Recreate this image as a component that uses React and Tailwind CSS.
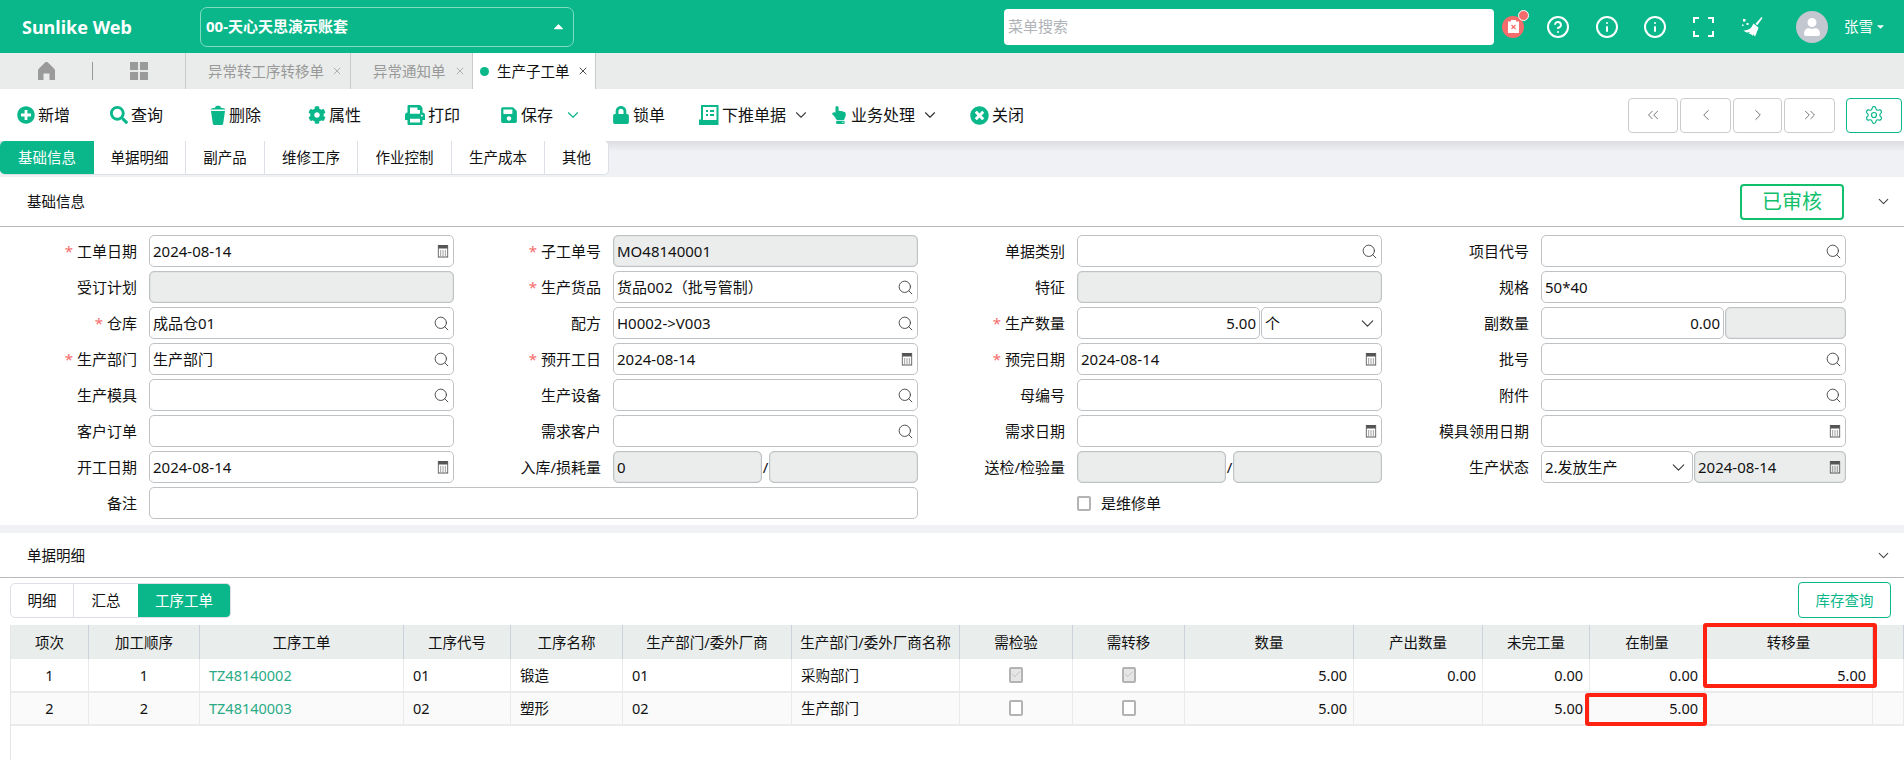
import React from "react";
import {
  FaPlusCircle, FaSearch, FaCog, FaPrint, FaSave, FaLock, FaHandPointUp, FaTimesCircle,
  FaUser, FaCaretUp, FaCaretDown,
} from "react-icons/fa";
import {
  ChevronDown, ChevronLeft, ChevronRight, ChevronsLeft, ChevronsRight, Search, Settings, Check, Info, CircleHelp, X,
} from "lucide-react";

const green = "text-[#09b78a]";

function CalendarIcon() {
  return (
    <svg width="12" height="14" viewBox="0 0 14 14" preserveAspectRatio="none" className="shrink-0 mr-[1px] text-[#555]">
      <rect x="1.5" y="1.5" width="11" height="11.5" fill="none" stroke="currentColor" />
      <rect x="1.5" y="1.5" width="11" height="3" fill="currentColor" />
      <path d="M3.5 7h1.4M6.3 7h1.4M9.1 7h1.4M3.5 9h1.4M6.3 9h1.4M9.1 9h1.4M3.5 11h1.4M6.3 11h1.4M9.1 11h1.4" stroke="currentColor" />
    </svg>
  );
}

function PushIcon() {
  return (
    <svg width="20" height="20" viewBox="0 0 20 20" className={green}>
      <path d="M3 1h15.5v18H1v-3.5h2z" fill="none" stroke="currentColor" strokeWidth="2" />
      <rect x="1" y="15" width="17" height="4.5" fill="currentColor" />
      <path d="M7 6h2M11 6h4M7 10h2M11 10h4" stroke="currentColor" strokeWidth="2" />
    </svg>
  );
}

function BucketIcon() {
  return (
    <svg width="16" height="20" viewBox="0 0 16 20" fill="currentColor" className={green}>
      <path d="M5.5 1.5C6 .5 10 .5 10.500 1.500L10.800 2.800C13 3 15 3.400 15.500 4.500H.5C1 3.400 3 3 5.200 2.800z" />
      <path d="M1 6h14l-1.800 12.500c-.1.800-.8 1.500-1.700 1.500H4.500c-.9 0-1.600-.7-1.700-1.500z" />
    </svg>
  );
}

function HomeIcon() {
  return (
    <svg width="17" height="18" viewBox="0 0 17 18" fill="currentColor">
      <path d="M8.500 0c1 0 1.500.5 2 1L16 6.500c.7.700 1 1.300 1 2.200V18h-5.500v-6.500h-6V18H0V8.700c0-.9.300-1.500 1-2.200L6.500 1c.5-.5 1-1 2-1z" />
    </svg>
  );
}

function BroomIcon() {
  return (
    <svg width="21" height="20" viewBox="0 0 21 20" fill="white">
      <path d="M19.500 0l1 1-5.200 7.200-1.800-1.400z" />
      <path d="M11.500 6.500l5 4c-.2 1.500-.8 2.700-1.400 3.700-.5 1.500-1 3.200-2 5.300l-2.300-2.200.2 1.700-2-1.700-2.400-.9 1.400-1.200-3.500.3-3-1.800c3-.5 5.500-1 7.500-3 .7-.8 1.500-2.500 2.500-4.200z" />
      <rect x="1" y="2" width="2.500" height="2.500" />
      <rect x="4.500" y="6" width="2" height="2" />
      <rect x="0" y="7.500" width="1.500" height="1.500" />
    </svg>
  );
}

function ToolButton({ icon, label, width, chevron }) {
  return (
    <div className={`flex items-center gap-[3px] ${width}`}>
      {icon}
      <span>{label}</span>
      {chevron && <ChevronDown size={18} strokeWidth={1.5} className={chevron} />}
    </div>
  );
}

function Field({ label, required, span, children }) {
  return (
    <div className={`flex items-center gap-3 h-[32px] ${span ? "col-span-2" : ""}`}>
      <label className="w-[137px] shrink-0 text-right whitespace-nowrap">
        {required && <span className="text-[#f56c6c] mr-1">*</span>}
        {label}
      </label>
      {children}
    </div>
  );
}

function Box({ value, disabled, icon, right, className = "w-[305px]" }) {
  return (
    <div
      className={`flex items-center h-[32px] px-[3px] border border-[#bfc2c4] rounded-[5px] shrink-0 ${className} ${
        disabled ? "bg-[#ebeded] shadow-[inset_0_0_1px_#999]" : "bg-white"
      } ${right ? "justify-end" : "justify-between"}`}
    >
      <span className="whitespace-nowrap">{value}</span>
      {icon === "search" && <Search size={17} strokeWidth={1.3} className="shrink-0 text-[#444]" />}
      {icon === "date" && <CalendarIcon />}
      {icon === "select" && <ChevronDown size={21} strokeWidth={1.2} className="shrink-0 text-[#333]" />}
    </div>
  );
}

function TinyCheck({ checked }) {
  return (
    <span className={`w-[14px] h-[16px] border-2 border-[#b3b3b3] rounded-[2px] flex items-center justify-center ${checked ? "bg-[#e6e6e6]" : "bg-white"}`}>
      {checked && <Check size={11} strokeWidth={1.2} className="text-[#999]" />}
    </span>
  );
}

const columns = [
  { title: "项次", w: "w-[78px]" },
  { title: "加工顺序", w: "w-[111px]" },
  { title: "工序工单", w: "w-[204px]" },
  { title: "工序代号", w: "w-[107px]" },
  { title: "工序名称", w: "w-[112px]" },
  { title: "生产部门/委外厂商", w: "w-[169px]" },
  { title: "生产部门/委外厂商名称", w: "w-[168px]" },
  { title: "需检验", w: "w-[113px]" },
  { title: "需转移", w: "w-[112px]" },
  { title: "数量", w: "w-[169px]" },
  { title: "产出数量", w: "w-[129px]" },
  { title: "未完工量", w: "w-[107px]" },
  { title: "在制量", w: "w-[115px]" },
  { title: "转移量", w: "w-[168px]" },
  { title: "", w: "flex-1" },
];

const rows = [
  ["1", "1", "TZ48140002", "01", "锻造", "01", "采购部门", true, true, "5.00", "0.00", "0.00", "0.00", "5.00", ""],
  ["2", "2", "TZ48140003", "02", "塑形", "02", "生产部门", false, false, "5.00", "", "5.00", "5.00", "", ""],
];

function Cell({ index, value, width }) {
  let cls = "justify-start px-[9px]";
  if (index < 2) cls = "justify-center";
  if (index === 7 || index === 8) cls = "justify-center";
  if (index >= 9) cls = "justify-end px-[6px]";
  return (
    <div className={`${width} ${index === 2 ? "text-[#2aab86]" : ""} flex items-center border-r border-[#e8eaec] shrink-0 ${cls}`}>
      {index === 7 || index === 8 ? <TinyCheck checked={value} /> : value}
    </div>
  );
}

export default function App() {
  return (
    <div className={`h-[760px] w-[1904px] overflow-hidden bg-white text-[15px] text-[#111] leading-none font-['Noto_Sans','Noto_Sans_CJK_SC',sans-serif]`}>
      {/* top bar */}
      <header className="h-[53px] bg-[#09b78a] flex items-center text-white relative">
        <div className="w-[200px] pl-[22px] text-[18px] font-bold">Sunlike Web</div>
        <div className="w-[374px] h-[40px] border border-[#7fdcc3] rounded-[7px] flex items-center justify-between pl-[5px] pr-[7px] font-bold text-[15px]">
          <span>00-天心天思演示账套</span>
          <FaCaretUp size={15} />
        </div>
        <div className="w-[490px] h-[36px] ml-[430px] bg-white rounded-[4px] flex items-center pl-1 text-[#b0b3b8]">菜单搜索</div>
        <div className="relative w-[22px] h-[22px] ml-[8px] rounded-full bg-[#f56c6c] flex items-center justify-center">
          <svg width="11" height="13" viewBox="0 0 11 13">
            <path d="M0 1.500h3V0h5v1.500h3V13H0z" fill="white" />
            <path d="M3.500 5l4 4M7.500 5l-4 4" stroke="#f56c6c" strokeWidth="1.200" />
          </svg>
          <span className="absolute -top-[6px] -right-[5px] w-[11px] h-[11px] rounded-full bg-[#f56c6c] border border-white" />
        </div>
        <CircleHelp size={24} strokeWidth={2} className="ml-[22px]" />
        <Info size={24} strokeWidth={2} className="ml-[25px]" />
        <Info size={24} strokeWidth={2} className="ml-[24px]" />
        <svg width="21" height="20" viewBox="0 0 21 20" fill="none" stroke="white" strokeWidth="2" className="ml-[26px]">
          <path d="M1 6V1h5M15 1h5v5M20 14v5h-5M6 19H1v-5" />
        </svg>
        <span className="ml-[28px]"><BroomIcon /></span>
        <div className="w-[32px] h-[32px] rounded-full bg-[#c3c7cf] ml-[33px] flex items-center justify-center overflow-hidden">
          <FaUser size={18} className="text-white" />
        </div>
        <span className="ml-[16px] text-[14.5px]">张雪</span>
        <FaCaretDown size={11} className="ml-[2px]" />
      </header>

      {/* open tabs */}
      <nav className="h-[36px] bg-[#e9ecea] flex text-[14.5px]">
        <div className="w-[185px] flex items-center text-[#9a9a9a]">
          <span className="ml-[38px]"><HomeIcon /></span>
          <span className="w-px h-[18px] bg-[#999] ml-[37px]" />
          <svg width="18" height="18" viewBox="0 0 19 19" fill="currentColor" className="ml-[37px]">
            <rect width="8.500" height="8.500" /><rect x="10.500" width="8.500" height="8.500" />
            <rect y="10.500" width="8.500" height="8.500" /><rect x="10.500" y="10.500" width="8.500" height="8.500" />
          </svg>
        </div>
        <div className="w-[166px] flex items-center justify-between pl-[22px] pr-[7px] border-l border-r border-[#c8cbca] text-[#999]">
          <span>异常转工序转移单</span><X size={12} strokeWidth={1.5} />
        </div>
        <div className="w-[122px] flex items-center justify-between pl-[22px] pr-[6px] border-r border-[#c8cbca] text-[#999]">
          <span>异常通知单</span><X size={12} strokeWidth={1.5} />
        </div>
        <div className="w-[123px] flex items-center pl-[7px] pr-[6px] bg-white border-r border-[#c8cbca]">
          <span className="w-[9px] h-[9px] rounded-full bg-[#09b78a] mr-[8px]" />
          <span>生产子工单</span><X size={12} strokeWidth={1.5} className="ml-auto" />
        </div>
      </nav>

      {/* toolbar */}
      <div className="h-[52px] flex items-center pl-[17px] bg-white text-[16px]">
        <ToolButton width="w-[93px]" label="新增" icon={<FaPlusCircle size={18} className={green} />} />
        <ToolButton width="w-[100px]" label="查询" icon={<FaSearch size={18} className={green} />} />
        <ToolButton width="w-[98px]" label="删除" icon={<BucketIcon />} />
        <ToolButton width="w-[97px]" label="属性" icon={<FaCog size={18} className={green} />} />
        <ToolButton width="w-[95px]" label="打印" icon={<FaPrint size={20} className={green} />} />
        <ToolButton width="w-[112px]" label="保存" chevron={`ml-[8px] ${green}`} icon={<FaSave size={18} className={green} />} />
        <ToolButton width="w-[87px]" label="锁单" icon={<FaLock size={18} className={green} />} />
        <ToolButton width="w-[131px]" label="下推单据" chevron="ml-[3px] text-[#444]" icon={<PushIcon />} />
        <ToolButton width="w-[140px]" label="业务处理" chevron="ml-[3px] text-[#333]" icon={<FaHandPointUp size={18} className={green} />} />
        <ToolButton width="w-[60px]" label="关闭" icon={<FaTimesCircle size={19} className={green} />} />
        <div className="ml-auto flex items-center gap-[2px] text-[#666]">
          <div className="w-[50px] h-[35px] border border-[#ccc] rounded-[4px] flex items-center justify-center"><ChevronsLeft size={18} strokeWidth={1.2} /></div>
          <div className="w-[51px] h-[35px] border border-[#ccc] rounded-[4px] flex items-center justify-center"><ChevronLeft size={18} strokeWidth={1.2} /></div>
          <div className="w-[49px] h-[35px] border border-[#ccc] rounded-[4px] flex items-center justify-center"><ChevronRight size={18} strokeWidth={1.2} /></div>
          <div className="w-[51px] h-[35px] border border-[#ccc] rounded-[4px] flex items-center justify-center"><ChevronsRight size={18} strokeWidth={1.2} /></div>
        </div>
        <div className="w-[56px] h-[35px] ml-[11px] mr-[2px] border border-[#09b78a] rounded-[4px] flex items-center justify-center">
          <Settings size={20} strokeWidth={1.4} className={green} />
        </div>
      </div>

      {/* form tabs */}
      <div className="h-[36px] bg-[#eff1f5] bg-gradient-to-b from-[#dcdde1] to-[#eff1f5] to-[30%]">
        <div className="flex w-[609px] h-[34px] text-[14.5px] bg-white rounded-[5px] border-b border-r border-[#dcdfe6] overflow-hidden">
          <div className="w-[94px] bg-[#09b78a] text-white flex items-center justify-center">基础信息</div>
          <div className="w-[92px] border-r border-[#dcdfe6] flex items-center justify-center">单据明细</div>
          <div className="w-[79px] border-r border-[#dcdfe6] flex items-center justify-center">副产品</div>
          <div className="w-[93px] border-r border-[#dcdfe6] flex items-center justify-center">维修工序</div>
          <div className="w-[94px] border-r border-[#dcdfe6] flex items-center justify-center">作业控制</div>
          <div className="w-[93px] border-r border-[#dcdfe6] flex items-center justify-center">生产成本</div>
          <div className="flex-1 flex items-center justify-center">其他</div>
        </div>
      </div>

      {/* basic info */}
      <div className="h-[50px] flex items-center border-b border-[#b9b9b9] pl-[27px] text-[14.5px]">
        <span>基础信息</span>
        <div className="ml-auto w-[104px] h-[36px] border-2 border-[#10c06b] rounded-[4px] text-[#10c06b] text-[20px] flex items-center justify-center">已审核</div>
        <ChevronDown size={17} strokeWidth={1.5} className="ml-[31px] mr-[12px] text-[#444]" />
      </div>

      <div className="grid grid-cols-[repeat(4,464px)] auto-rows-[32px] content-start gap-y-[4px] pt-[8px] h-[298px]">
        <Field label="工单日期" required><Box value="2024-08-14" icon="date" /></Field>
        <Field label="子工单号" required><Box value="MO48140001" disabled /></Field>
        <Field label="单据类别"><Box icon="search" /></Field>
        <Field label="项目代号"><Box icon="search" /></Field>

        <Field label="受订计划"><Box disabled /></Field>
        <Field label="生产货品" required><Box value="货品002（批号管制）" icon="search" /></Field>
        <Field label="特征"><Box disabled /></Field>
        <Field label="规格"><Box value="50*40" /></Field>

        <Field label="仓库" required><Box value="成品仓01" icon="search" /></Field>
        <Field label="配方"><Box value="H0002->V003" icon="search" /></Field>
        <Field label="生产数量" required>
          <div className="flex gap-[1px]">
            <Box value="5.00" right className="w-[183px]" />
            <Box value="个" icon="select" className="w-[121px]" />
          </div>
        </Field>
        <Field label="副数量">
          <div className="flex gap-[1px]">
            <Box value="0.00" right className="w-[183px]" />
            <Box disabled className="w-[121px]" />
          </div>
        </Field>

        <Field label="生产部门" required><Box value="生产部门" icon="search" /></Field>
        <Field label="预开工日" required><Box value="2024-08-14" icon="date" /></Field>
        <Field label="预完日期" required><Box value="2024-08-14" icon="date" /></Field>
        <Field label="批号"><Box icon="search" /></Field>

        <Field label="生产模具"><Box icon="search" /></Field>
        <Field label="生产设备"><Box icon="search" /></Field>
        <Field label="母编号"><Box /></Field>
        <Field label="附件"><Box icon="search" /></Field>

        <Field label="客户订单"><Box /></Field>
        <Field label="需求客户"><Box icon="search" /></Field>
        <Field label="需求日期"><Box icon="date" /></Field>
        <Field label="模具领用日期"><Box icon="date" /></Field>

        <Field label="开工日期"><Box value="2024-08-14" icon="date" /></Field>
        <Field label="入库/损耗量">
          <div className="flex items-center justify-between w-[305px]">
            <Box value="0" disabled className="w-[149px]" />
            <span>/</span>
            <Box disabled className="w-[149px]" />
          </div>
        </Field>
        <Field label="送检/检验量">
          <div className="flex items-center justify-between w-[305px]">
            <Box disabled className="w-[149px]" />
            <span>/</span>
            <Box disabled className="w-[149px]" />
          </div>
        </Field>
        <Field label="生产状态">
          <div className="flex gap-[1px]">
            <Box value="2.发放生产" icon="select" className="w-[152px]" />
            <Box value="2024-08-14" disabled icon="date" className="w-[152px]" />
          </div>
        </Field>

        <Field label="备注" span><Box className="w-[769px]" /></Field>
        <div className="flex items-center gap-[10px] h-[32px] pl-[149px] whitespace-nowrap">
          <span className="w-[14px] h-[15px] border-2 border-[#b3b3b3] rounded-[2px] bg-white" />
          是维修单
        </div>
      </div>

      <div className="h-[8px] bg-[#eff1f5]" />

      {/* detail section */}
      <div className="h-[45px] flex items-center justify-between border-b border-[#b9b9b9] pl-[27px] text-[14.5px]">
        <span>单据明细</span>
        <ChevronDown size={17} strokeWidth={1.5} className="mr-[12px] text-[#444]" />
      </div>

      <div className="flex items-center justify-between pt-[4px] pl-[10px] pr-[13px] h-[40px] text-[14.5px]">
        <div className="flex h-[35px] w-[221px] border border-[#dcdfe6] rounded-[5px] overflow-hidden">
          <div className="w-[63px] border-r border-[#dcdfe6] flex items-center justify-center">明细</div>
          <div className="w-[64px] flex items-center justify-center">汇总</div>
          <div className="flex-1 bg-[#09b78a] text-white flex items-center justify-center">工序工单</div>
        </div>
        <div className="w-[93px] h-[36px] border border-[#09b78a] rounded-[4px] text-[#09b78a] flex items-center justify-center">库存查询</div>
      </div>

      {/* grid */}
      <div className="relative mt-[7px] ml-[10px] h-[136px] border-l border-[#e4e6e8] text-[14.5px]">
        <div className="flex h-[34px] bg-[#e9edec]">
          {columns.map((c) => (
            <div key={c.title || "end"} className={`${c.w} shrink-0 flex items-center justify-center border-r border-[#ccd2dc] whitespace-nowrap`}>
              {c.title}
            </div>
          ))}
        </div>
        {rows.map((row, r) => (
          <div key={r} className={`flex h-[33.5px] border-b-2 border-[#e8eaec] ${r === 1 ? "bg-[#fafafa]" : "bg-white"}`}>
            {row.map((value, i) => (
              <Cell key={i} index={i} value={value} width={columns[i].w} />
            ))}
          </div>
        ))}
        {/* highlights drawn on top of the grid */}
        <div className="absolute left-[1692px] top-[-2px] w-[174px] h-[65px] border-4 border-[#ff2211] rounded-[3px]" />
        <div className="absolute left-[1574px] top-[68px] w-[122px] h-[33px] border-4 border-[#ff2211] rounded-[3px]" />
      </div>
    </div>
  );
}
